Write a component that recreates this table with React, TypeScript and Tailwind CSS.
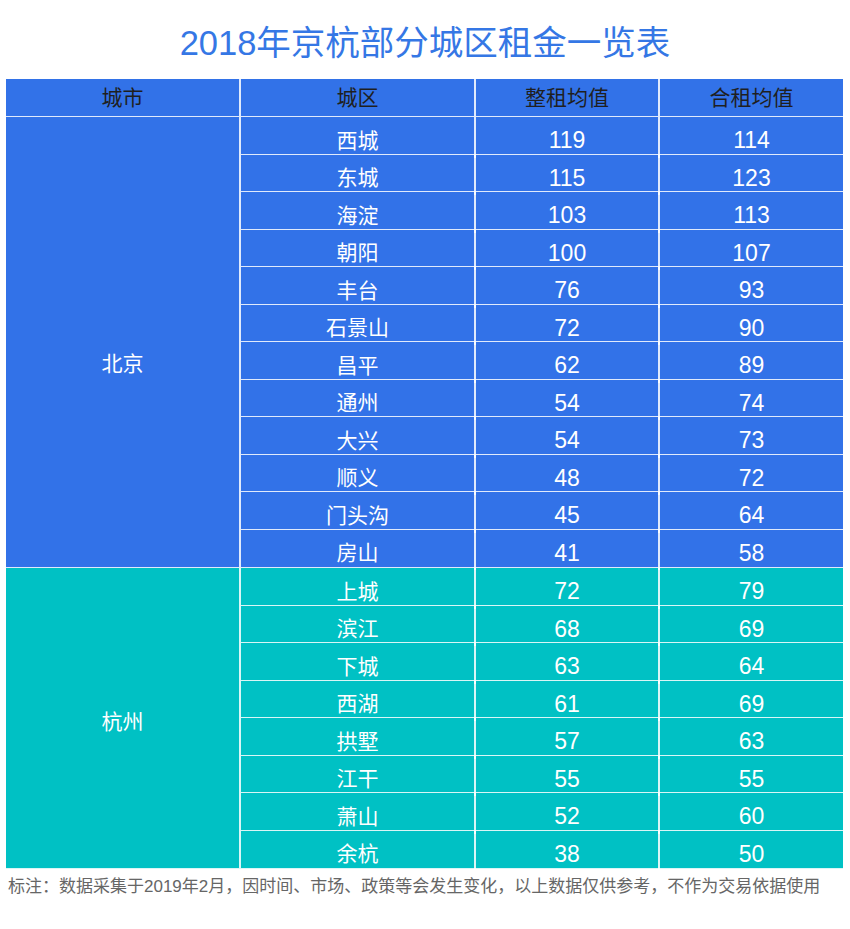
const FONT = '"Liberation Sans", "Noto Sans CJK SC", sans-serif'

type Row = [string, number, number]

const beijing: Row[] = [
  ["西城", 119, 114],
  ["东城", 115, 123],
  ["海淀", 103, 113],
  ["朝阳", 100, 107],
  ["丰台", 76, 93],
  ["石景山", 72, 90],
  ["昌平", 62, 89],
  ["通州", 54, 74],
  ["大兴", 54, 73],
  ["顺义", 48, 72],
  ["门头沟", 45, 64],
  ["房山", 41, 58],
]

const hangzhou: Row[] = [
  ["上城", 72, 79],
  ["滨江", 68, 69],
  ["下城", 63, 64],
  ["西湖", 61, 69],
  ["拱墅", 57, 63],
  ["江干", 55, 55],
  ["萧山", 52, 60],
  ["余杭", 38, 50],
]

function CityBlock({
  city,
  rows,
  bg,
  labelPad,
}: {
  city: string
  rows: Row[]
  bg: string
  labelPad: string
}) {
  return (
    <div className={`flex border-b-[1.5px] border-white/85 ${bg}`}>
      <div
        className={`flex w-[235px] shrink-0 items-center justify-center border-r-2 border-white/85 text-[21px] text-white ${labelPad}`}
      >
        {city}
      </div>
      <div className="flex-1">
        {rows.map(([name, whole, shared], i) => (
          <div
            key={name}
            className={`grid h-[37.5px] grid-cols-[235px_184px_1fr] items-center text-white ${
              i < rows.length - 1 ? "border-b-[1.5px] border-white/85" : ""
            }`}
          >
            <div className="flex h-full items-center justify-center border-r-2 border-white/85 pt-[6px] text-[21px]">
              {name}
            </div>
            <div className="flex h-full items-center justify-center border-r-2 border-white/85 pt-[6px] text-[23px]">
              {whole}
            </div>
            <div className="flex h-full items-center justify-center pt-[6px] text-[23px]">
              {shared}
            </div>
          </div>
        ))}
      </div>
    </div>
  )
}

export default function App() {
  return (
    <div className="h-[929px] w-[850px] bg-white" style={{ fontFamily: FONT }}>
      <div className="flex h-[79px] items-center justify-center pt-[8px] text-[34.5px] text-[#3577e5]">
        2018年京杭部分城区租金一览表
      </div>

      <div className="ml-[6px] w-[837px]">
        <div className="grid h-[38px] grid-cols-[235px_235px_184px_1fr] border-b-[1.5px] border-white/85 bg-[#3272e8] text-[21px] text-[#1f1f1f]">
          <div className="flex items-center justify-center border-r-2 border-white/85">城市</div>
          <div className="flex items-center justify-center border-r-2 border-white/85">城区</div>
          <div className="flex items-center justify-center border-r-2 border-white/85">整租均值</div>
          <div className="flex items-center justify-center">合租均值</div>
        </div>

        <CityBlock city="北京" rows={beijing} bg="bg-[#3272e8]" labelPad="pt-[44px]" />
        <CityBlock city="杭州" rows={hangzhou} bg="bg-[#00c1c4]" labelPad="pt-[8px]" />
      </div>

      <div className="pl-[8px] pt-[6px] text-[17px] leading-[24px] text-[#666666]">
        标注：数据采集于2019年2月，因时间、市场、政策等会发生变化，以上数据仅供参考，不作为交易依据使用
      </div>
    </div>
  )
}
